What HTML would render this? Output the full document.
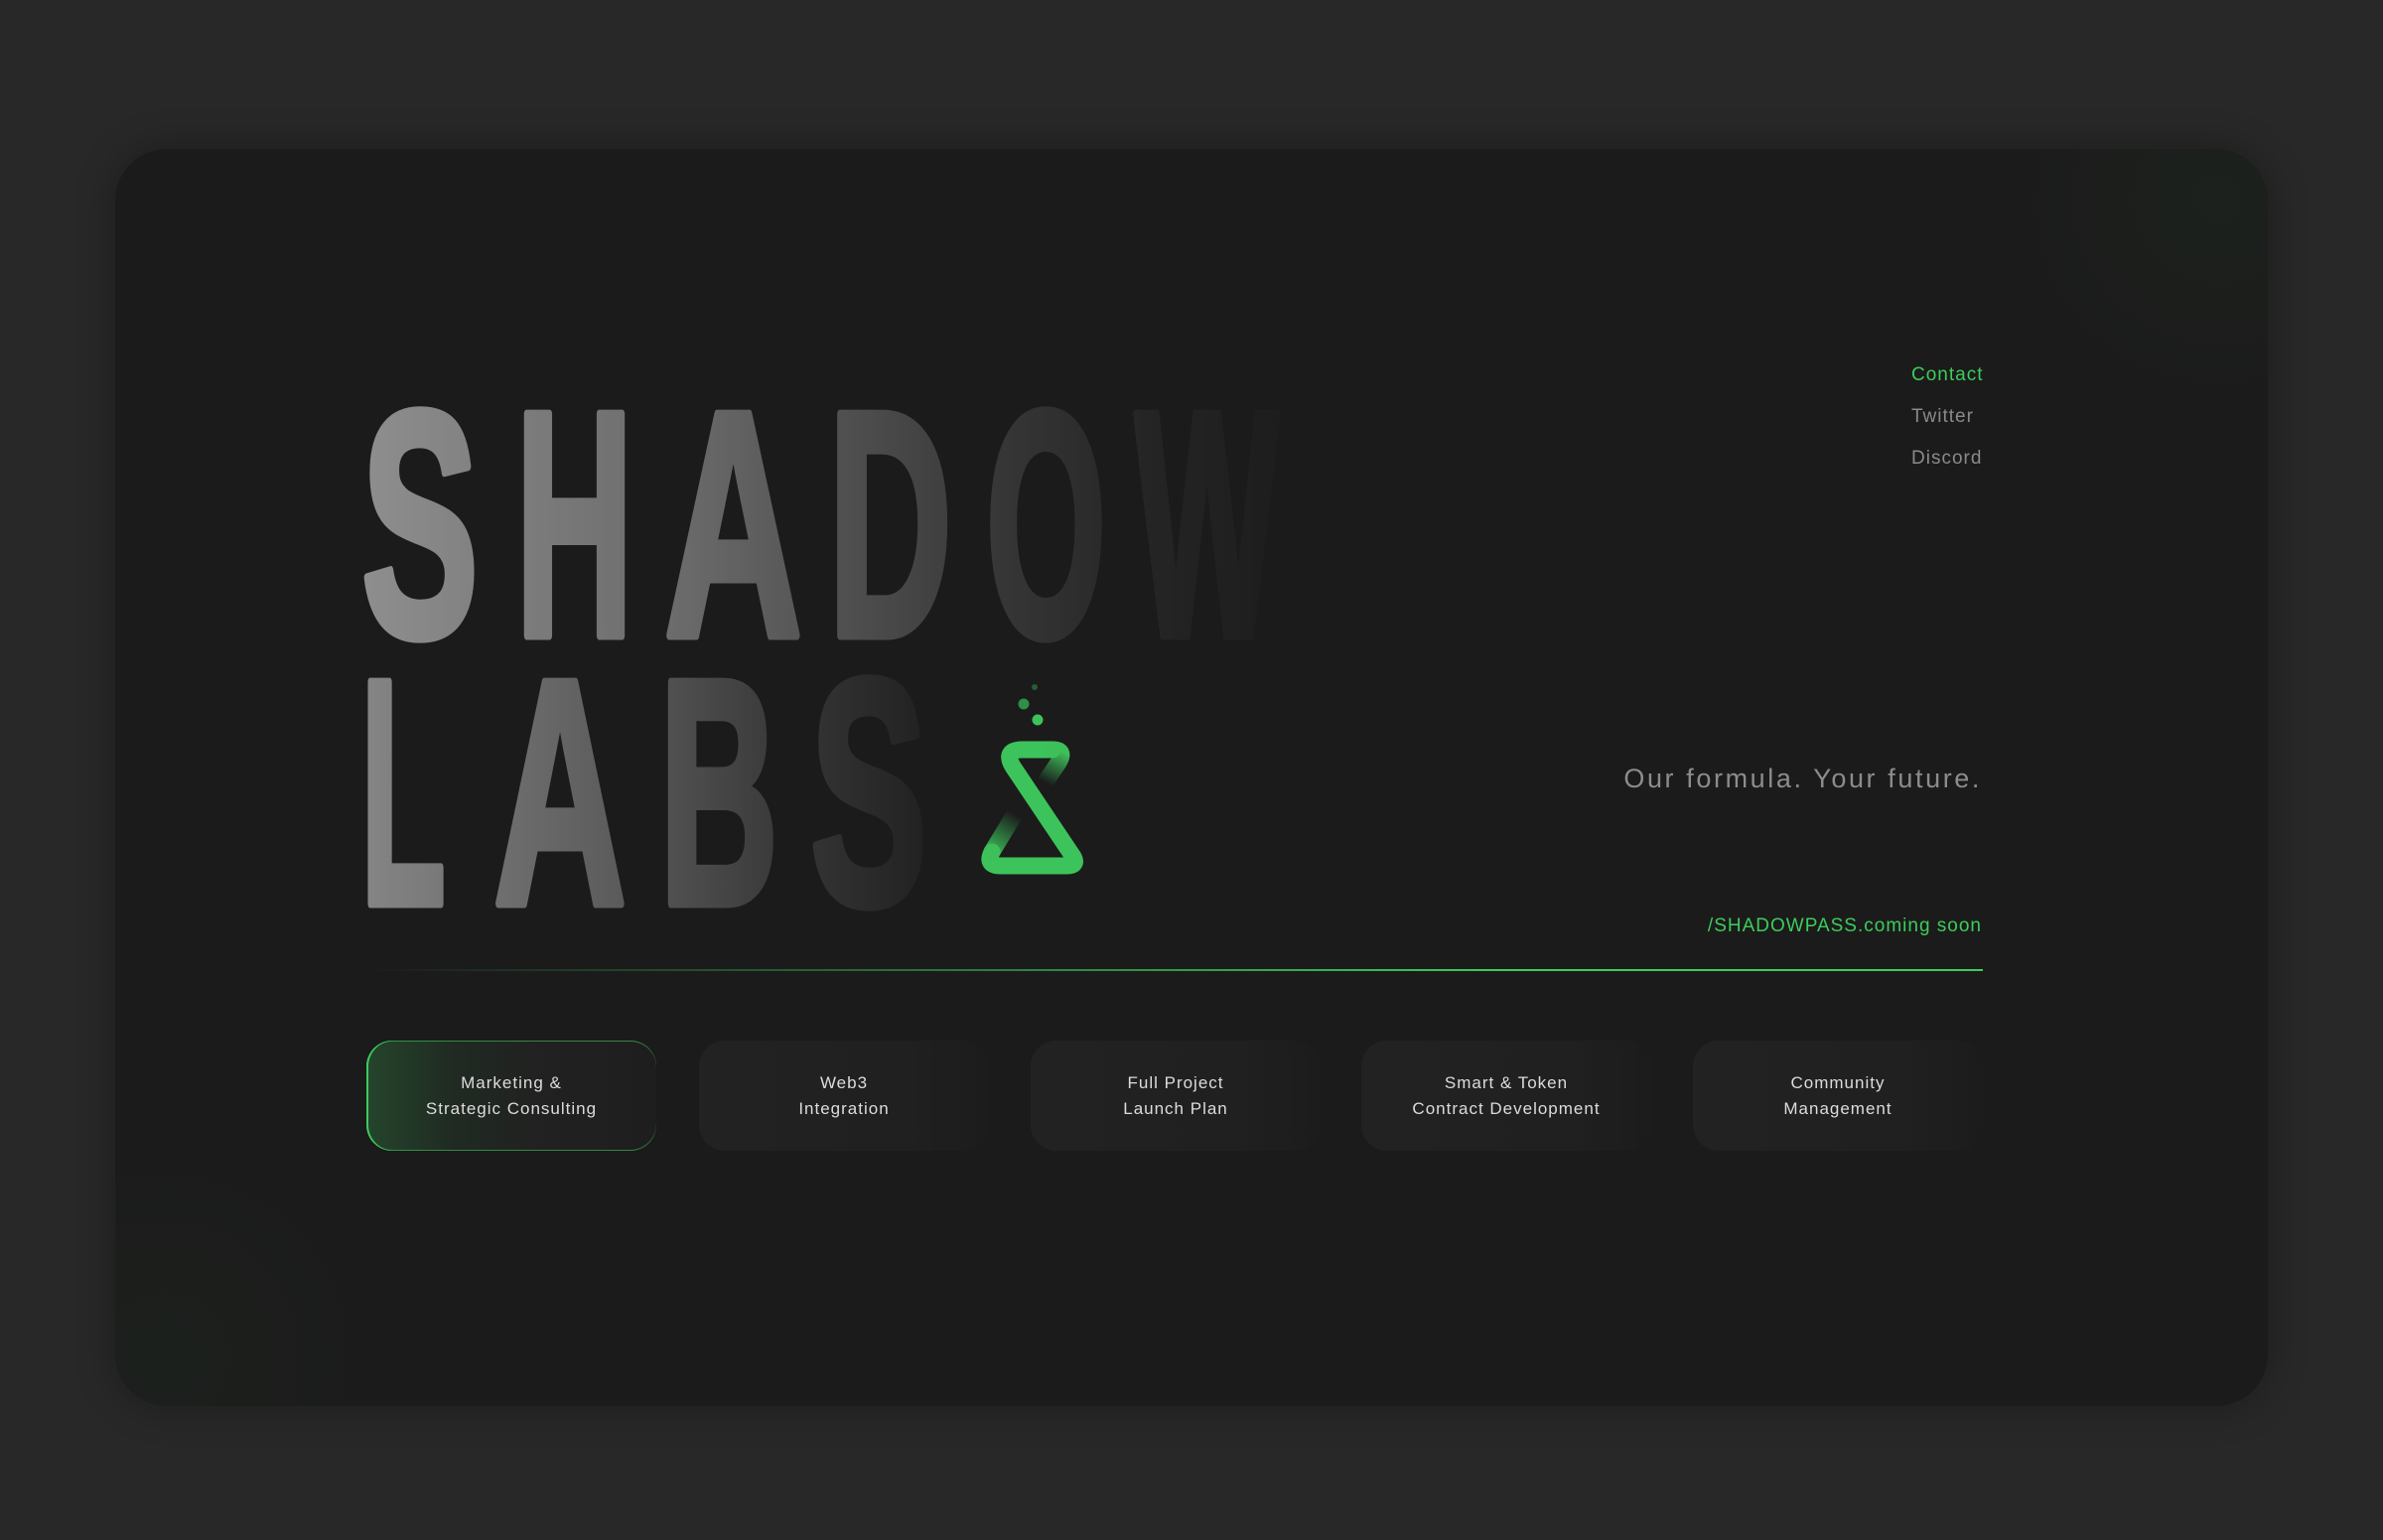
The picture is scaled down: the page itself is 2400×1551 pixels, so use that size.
<!DOCTYPE html>
<html><head><meta charset="utf-8"><style>
html,body{margin:0;padding:0;background:#282828;width:2400px;height:1551px;overflow:hidden;font-family:"Liberation Sans",sans-serif;position:relative}
.card{position:absolute;left:116px;top:150px;width:2168px;height:1266px;border-radius:52px;background:#1b1b1b;box-shadow:0 0 40px rgba(0,0,0,.3);overflow:hidden}
.glow1{position:absolute;right:-150px;top:-150px;width:400px;height:400px;background:radial-gradient(circle closest-side,rgba(40,80,48,.12),rgba(27,27,27,0))}
.glow2{position:absolute;left:-150px;bottom:-150px;width:400px;height:400px;background:radial-gradient(circle closest-side,rgba(40,80,48,.1),rgba(27,27,27,0))}
svg.main{position:absolute;left:0;top:0}
.nav{position:absolute;left:1925px;font-size:19px;letter-spacing:1px;color:#8a8a8a}
.tag{position:absolute;right:404px;top:769px;font-size:27px;letter-spacing:2.6px;color:#8c8c8c;white-space:nowrap}
.soon{position:absolute;right:404px;top:922px;font-size:19px;letter-spacing:1px;color:#3dcc5c;white-space:nowrap}
.line{position:absolute;left:367px;top:976px;width:1630px;height:2px;background:linear-gradient(90deg,rgba(61,204,92,0),#3dcc5c 70%)}
.btn{position:absolute;top:1048px;width:292px;height:111px;border-radius:26px;background:linear-gradient(90deg,#222 0%,#202020 70%,#1c1c1c 100%);color:#dcdcdc;font-size:17px;letter-spacing:1px;line-height:26px;text-align:center;display:flex;align-items:center;justify-content:center}
.btn.a{background:linear-gradient(90deg,#25452c 0%,#202a22 30%,#212121 60%,#1e1e1e 100%);box-shadow:inset 2px 0 0 #3dcc5c, inset 0 1px 0 rgba(61,204,92,.6), inset 0 -1px 0 rgba(61,204,92,.6)}
</style></head><body>
<div class="card"><div class="glow1"></div><div class="glow2"></div></div>
<svg class="main" width="2400" height="1551" viewBox="0 0 2400 1551">
<defs>
<linearGradient id="g1" gradientUnits="userSpaceOnUse" x1="367" y1="0" x2="1290" y2="0">
<stop offset="0" stop-color="#8e8e8e"/><stop offset="0.35" stop-color="#6a6a6a"/><stop offset="0.68" stop-color="#383838"/><stop offset="0.85" stop-color="#252525"/><stop offset="1" stop-color="#1d1d1d"/></linearGradient>
<linearGradient id="g2" gradientUnits="userSpaceOnUse" x1="367" y1="0" x2="950" y2="0">
<stop offset="0" stop-color="#858585"/><stop offset="0.45" stop-color="#5a5a5a"/><stop offset="0.75" stop-color="#353535"/><stop offset="1" stop-color="#1f1f1f"/></linearGradient>
<linearGradient id="s1" gradientUnits="userSpaceOnUse" x1="1068" y1="756" x2="1052" y2="788"><stop offset="0" stop-color="#3dbf5a"/><stop offset="1" stop-color="#3dbf5a" stop-opacity="0"/></linearGradient>
<linearGradient id="s2" gradientUnits="userSpaceOnUse" x1="997" y1="860" x2="1022" y2="820"><stop offset="0" stop-color="#3dbf5a"/><stop offset="1" stop-color="#3dbf5a" stop-opacity="0"/></linearGradient>
</defs>
<g font-family="Liberation Sans, sans-serif" font-weight="bold" font-size="324" fill="url(#g1)" stroke="url(#g1)" stroke-width="9" stroke-linejoin="round">
<text x="364" y="640" textLength="118" lengthAdjust="spacingAndGlyphs">S</text>
<text x="519" y="640" textLength="119" lengthAdjust="spacingAndGlyphs">H</text>
<text x="669" y="640" textLength="139" lengthAdjust="spacingAndGlyphs">A</text>
<text x="834" y="640" textLength="125" lengthAdjust="spacingAndGlyphs">D</text>
<text x="993" y="640" textLength="121" lengthAdjust="spacingAndGlyphs">O</text>
<text x="1143" y="640" textLength="145" lengthAdjust="spacingAndGlyphs">W</text>
</g>
<g font-family="Liberation Sans, sans-serif" font-weight="bold" font-size="324" fill="url(#g2)" stroke="url(#g2)" stroke-width="9" stroke-linejoin="round">
<text x="363" y="910" textLength="86" lengthAdjust="spacingAndGlyphs">L</text>
<text x="497" y="910" textLength="134" lengthAdjust="spacingAndGlyphs">A</text>
<text x="664" y="910" textLength="120" lengthAdjust="spacingAndGlyphs">B</text>
<text x="816" y="910" textLength="118" lengthAdjust="spacingAndGlyphs">S</text>
</g>
<g fill="none" stroke-width="17" stroke-linejoin="round" stroke-linecap="round">
<path d="M1060,755 H1030 Q1010,755 1020,772 L1079,860 Q1088,872 1074,872 H1008 Q992,872 999,858" stroke="#3dc35b"/>
<path d="M1060,755 Q1074,755 1066,768 L1054,786" stroke="url(#s1)"/>
<line x1="999" y1="858" x2="1022" y2="820" stroke="url(#s2)"/>
</g>
<circle cx="1045" cy="725" r="5.5" fill="#3dc35b"/>
<circle cx="1031" cy="709" r="5.5" fill="#2e8f45"/>
<circle cx="1042" cy="692" r="3" fill="#245e33"/>
</svg>
<div class="nav" style="top:367px;color:#3dcc5c">Contact</div>
<div class="nav" style="top:409px">Twitter</div>
<div class="nav" style="top:451px">Discord</div>
<div class="tag">Our formula. Your future.</div>
<div class="soon">/SHADOWPASS.coming soon</div>
<div class="line"></div>
<div class="btn a" style="left:369px">Marketing &amp;<br>Strategic Consulting</div>
<div class="btn" style="left:704px">Web3<br>Integration</div>
<div class="btn" style="left:1038px">Full Project<br>Launch Plan</div>
<div class="btn" style="left:1371px">Smart &amp; Token<br>Contract Development</div>
<div class="btn" style="left:1705px">Community<br>Management</div>
</body></html>
